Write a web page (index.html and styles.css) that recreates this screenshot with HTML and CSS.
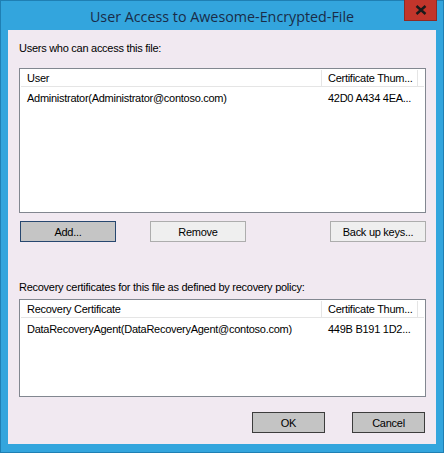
FILE: index.html
```html
<!DOCTYPE html>
<html>
<head>
<meta charset="utf-8">
<link rel="stylesheet" href="styles.css">
</head>
<body>
<div class="window">
  <div class="titlebar">
    <div class="title">User Access to Awesome-Encrypted-File</div>
    <div class="close"><svg width="12" height="10" viewBox="0 0 12 10"><path d="M1.5 1 L10.5 9 M10.5 1 L1.5 9" stroke="#1a1a1a" stroke-width="2.4" fill="none"/></svg></div>
  </div>
  <div class="client">
    <div class="label label-users">Users who can access this file:</div>
    <div class="list list-users">
      <div class="row header">
        <div class="col c1">User</div>
        <div class="col c2">Certificate Thum...</div>
        <div class="col c3"></div>
      </div>
      <div class="row">
        <div class="col c1">Administrator(Administrator@contoso.com)</div>
        <div class="col c2">42D0 A434 4EA...</div>
      </div>
    </div>
    <div class="buttons">
      <button class="btn default">Add...</button>
      <button class="btn light remove">Remove</button>
      <button class="btn light backup">Back up keys...</button>
    </div>
    <div class="label label-recovery">Recovery certificates for this file as defined by recovery policy:</div>
    <div class="list list-recovery">
      <div class="row header">
        <div class="col c1">Recovery Certificate</div>
        <div class="col c2">Certificate Thum...</div>
        <div class="col c3"></div>
      </div>
      <div class="row">
        <div class="col c1">DataRecoveryAgent(DataRecoveryAgent@contoso.com)</div>
        <div class="col c2">449B B191 1D2...</div>
      </div>
    </div>
    <div class="footer">
      <button class="btn dark">OK</button>
      <button class="btn dark">Cancel</button>
    </div>
  </div>
</div>
</body>
</html>
```
FILE: styles.css
```css
* { box-sizing: border-box; }
html, body { margin: 0; padding: 0; }
body { width: 444px; height: 453px; overflow: hidden; font-family: "Liberation Sans", Arial, sans-serif; font-size: 11px; letter-spacing: -0.27px; color: #000; }
.window {
  width: 444px; height: 453px;
  background: #33a5dd;
  border: 1px solid #1f7fb3;
  display: flex; flex-direction: column;
  position: relative;
}
.titlebar {
  height: 29px;
  display: flex; align-items: center; justify-content: center;
}
.title {
  font-family: "Open Sans", "Noto Sans", sans-serif;
  font-size: 14.3px;
  letter-spacing: 0;
  color: #1a2c48;
  padding-top: 1px;
}
.close {
  position: absolute; top: -1px; right: 6px;
  width: 33px; height: 21px;
  background: #c2352b;
  border: 1px solid #8f2a24;
  border-top: none;
  display: flex; align-items: center; justify-content: center;
}
.client {
  margin: 0 7px 8px 7px;
  flex: 1;
  background: #f1e9f1;
  padding: 11px 10px 0 11px;
  display: flex; flex-direction: column;
}
.label { height: 14px; line-height: 14px; }
.list {
  background: #fff;
  border: 1px solid #828790;
  padding: 1px;
}
.list-users { margin-top: 13px; height: 145px; }
.list-recovery { margin-top: 5px; height: 98px; }
.row { display: flex; height: 16px; line-height: 16px; }
.row.header { height: 17px; line-height: 16px; border-bottom: 1px solid #e5e5e5; }
.col { padding-left: 6px; white-space: nowrap; overflow: hidden; }
.c1 { width: 301px; }
.c2 { width: 96px; }
.header .c1, .header .c2 { border-right: 1px solid #e5e5e5; }
.header .c3 { flex: 1; }
.list .row:not(.header) { margin-top: 3px; }
.buttons {
  margin-top: 8px;
  display: flex;
  padding-left: 1px;
}
.btn {
  width: 96px; height: 21px;
  font-family: "Liberation Sans", Arial, sans-serif;
  font-size: 11px; letter-spacing: -0.27px; color: #000;
  padding: 0; margin: 0;
  border-radius: 0;
}
.btn.remove { margin-left: 34px; }
.btn.backup { margin-left: auto; }
.btn.default { background: #c5c5c5; border: 1px solid #27476f; }
.btn.light { background: #efefef; border: 1px solid #adadad; }
.btn.dark { background: #c4c4c4; border: 1px solid #3c3c3c; width: 73px; }
.label-recovery { margin-top: 38px; }
.footer {
  margin-top: 15px;
  display: flex; justify-content: flex-end; gap: 27px;
  padding-right: 1px;
}
```
